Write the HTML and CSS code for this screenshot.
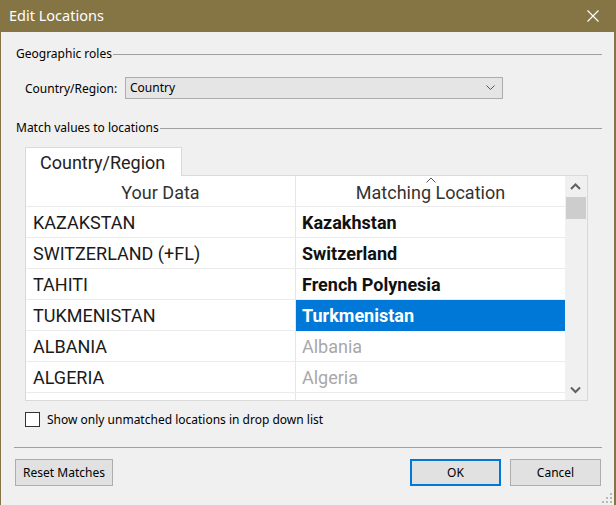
FILE: index.html
```html
<!DOCTYPE html>
<html>
<head>
<meta charset="utf-8">
<link rel="stylesheet" href="styles.css">
</head>
<body>
<div class="window">
  <div class="titlebar">
    <span class="title">Edit Locations</span>
    <svg class="close" width="12" height="12" viewBox="0 0 12 12"><path d="M0.5 0.5 L11.5 11.5 M11.5 0.5 L0.5 11.5" stroke="#fff" stroke-width="1.2" fill="none"/></svg>
  </div>
  <div class="content">
    <div class="legend"><span class="legend-text">Geographic roles</span><span class="rule"></span></div>
    <div class="role-row">
      <span class="role-label">Country/Region:</span>
      <div class="select"><span>Country</span>
        <svg width="9" height="5" viewBox="0 0 9 5"><path d="M0.5 0.5 L4.5 4.5 L8.5 0.5" stroke="#555" stroke-width="1" fill="none"/></svg>
      </div>
    </div>
    <div class="legend legend-2"><span class="legend-text">Match values to locations</span><span class="rule"></span></div>
    <div class="tabs"><div class="tab">Country/Region</div></div>
    <div class="grid">
      <div class="table">
        <div class="row head">
          <div class="cell c1">Your Data</div>
          <div class="cell c2">Matching Location
            <svg class="sort" width="10" height="6" viewBox="0 0 10 6"><path d="M0.5 5.5 L5 1 L9.5 5.5" stroke="#555" stroke-width="1" fill="none"/></svg>
          </div>
        </div>
        <div class="row"><div class="cell c1">KAZAKSTAN</div><div class="cell c2 matched">Kazakhstan</div></div>
        <div class="row"><div class="cell c1">SWITZERLAND (+FL)</div><div class="cell c2 matched">Switzerland</div></div>
        <div class="row"><div class="cell c1">TAHITI</div><div class="cell c2 matched">French Polynesia</div></div>
        <div class="row"><div class="cell c1">TUKMENISTAN</div><div class="cell c2 matched selected">Turkmenistan</div></div>
        <div class="row"><div class="cell c1">ALBANIA</div><div class="cell c2 unmatched">Albania</div></div>
        <div class="row"><div class="cell c1">ALGERIA</div><div class="cell c2 unmatched">Algeria</div></div>
        <div class="row"><div class="cell c1"></div><div class="cell c2"></div></div>
      </div>
      <div class="scrollbar">
        <svg class="arrow" width="21" height="21" viewBox="0 0 21 21"><path d="M6 13 L10.5 8.5 L15 13" stroke="#606060" stroke-width="2" fill="none"/></svg>
        <div class="thumb"></div>
        <div class="track"></div>
        <svg class="arrow" width="21" height="21" viewBox="0 0 21 21"><path d="M6 8.5 L10.5 13 L15 8.5" stroke="#606060" stroke-width="2" fill="none"/></svg>
      </div>
    </div>
    <label class="check"><span class="box"></span><span>Show only unmatched locations in drop down list</span></label>
    <div class="sep"></div>
    <div class="buttons">
      <button class="btn reset">Reset Matches</button>
      <span class="spacer"></span>
      <button class="btn default">OK</button>
      <button class="btn cancel">Cancel</button>
    </div>
    <svg class="grip" width="10" height="10" viewBox="0 0 10 10">
      <rect x="8" y="0" width="2" height="2" fill="#b8b8b8"/>
      <rect x="4" y="4" width="2" height="2" fill="#b8b8b8"/>
      <rect x="8" y="4" width="2" height="2" fill="#b8b8b8"/>
      <rect x="0" y="8" width="2" height="2" fill="#b8b8b8"/>
      <rect x="4" y="8" width="2" height="2" fill="#b8b8b8"/>
      <rect x="8" y="8" width="2" height="2" fill="#b8b8b8"/>
    </svg>
  </div>
</div>
</body>
</html>
```
FILE: styles.css
```css
* { box-sizing: border-box; }
html, body { margin: 0; padding: 0; }
body {
  background: #857545;
  font-family: "Noto Sans", "Open Sans", sans-serif;
  font-size: 12px;
  color: #000;
}
.window {
  width: 616px;
  height: 505px;
  display: flex;
  flex-direction: column;
}
.titlebar {
  height: 32px;
  flex: none;
  display: flex;
  align-items: center;
  justify-content: space-between;
  padding: 0 17px 3px 9px;
  color: #fff;
}
.title { font-size: 14.5px; }
.close { margin-top: 2px; }
.content {
  position: relative;
  flex: 1;
  background: #f0f0f0;
  margin: 0 2px 0 1px;
  padding: 0 12px 0 15px;
  display: flex;
  flex-direction: column;
}
.legend {
  margin-top: 14px;
  height: 16px;
  display: flex;
  align-items: center;
  line-height: 16px;
}
.legend-2 { margin-top: 21px; }
.legend-text { white-space: nowrap; padding-right: 1px; }
.rule { flex: 1; height: 1px; background: #a0a0a0; }
.role-row {
  margin-top: 15px;
  margin-left: 9px;
  height: 22px;
  display: flex;
  align-items: center;
}
.role-label { width: 100px; }
.select {
  width: 378px;
  height: 22px;
  background: #e5e5e5;
  border: 1px solid #adadad;
  display: flex;
  align-items: center;
  justify-content: space-between;
  padding: 0 7px 1px 4px;
}
.tabs {
  margin-top: 11px;
  margin-left: 9px;
  display: flex;
}
.tab {
  position: relative;
  z-index: 1;
  width: 157px;
  height: 29px;
  margin-bottom: -1px;
  background: #fff;
  border: 1px solid #d9d9d9;
  border-bottom: none;
  font-family: "Roboto", sans-serif;
  font-size: 18px;
  color: #222;
  padding-left: 14px;
  line-height: 29px;
}
.grid {
  margin-left: 9px;
  width: 563px;
  height: 226px;
  border: 1px solid #d9d9d9;
  background: #fff;
  display: flex;
  overflow: hidden;
  font-family: "Roboto", sans-serif;
  font-size: 18px;
}
.table { width: 539px; }
.row {
  display: flex;
  height: 31px;
  border-bottom: 1px solid #ebebeb;
}
.cell {
  height: 30px;
  line-height: 30px;
  padding-top: 1px;
  white-space: nowrap;
  color: #1a1a1a;
}
.c1 { width: 270px; border-right: 1px solid #e6e6e6; padding-left: 7px; }
.c2 { width: 269px; padding-left: 6px; }
.head .cell { height: 30px; text-align: center; padding-left: 0; padding-top: 2px; color: #333; }
.head .c2 { position: relative; }
.sort { position: absolute; left: 130px; top: 1px; }
.matched { font-weight: bold; color: #111; }
.unmatched { color: #a8a8a8; }
.selected { background: #0078d7; color: #fff; height: 31px; }
.scrollbar {
  width: 22px;
  background: #f0f0f0;
  display: flex;
  flex-direction: column;
}
.arrow { display: block; flex: none; }
.thumb { height: 22px; margin: 0 1px; background: #cdcdcd; flex: none; }
.track { flex: 1; }
.check {
  margin-top: 11px;
  margin-left: 9px;
  height: 15px;
  display: flex;
  align-items: center;
}
.box {
  width: 15px;
  height: 15px;
  border: 1px solid #333;
  background: #fff;
  margin-right: 7px;
}
.sep {
  margin-top: 20px;
  margin-left: -2px;
  height: 1px;
  background: #a0a0a0;
}
.buttons {
  margin-top: 11px;
  margin-left: -1px;
  display: flex;
  height: 27px;
}
.spacer { flex: 1; }
.btn {
  font-family: "Noto Sans", "Open Sans", sans-serif;
  font-size: 12px;
  height: 27px;
  background: #e1e1e1;
  border: 1px solid #adadad;
  color: #000;
  padding: 0;
}
.reset { width: 98px; }
.default { width: 91px; border: 2px solid #0078d7; margin-right: 9px; }
.cancel { width: 91px; margin-right: 1px; }
.grip { position: absolute; right: 2px; bottom: 2px; }
```
